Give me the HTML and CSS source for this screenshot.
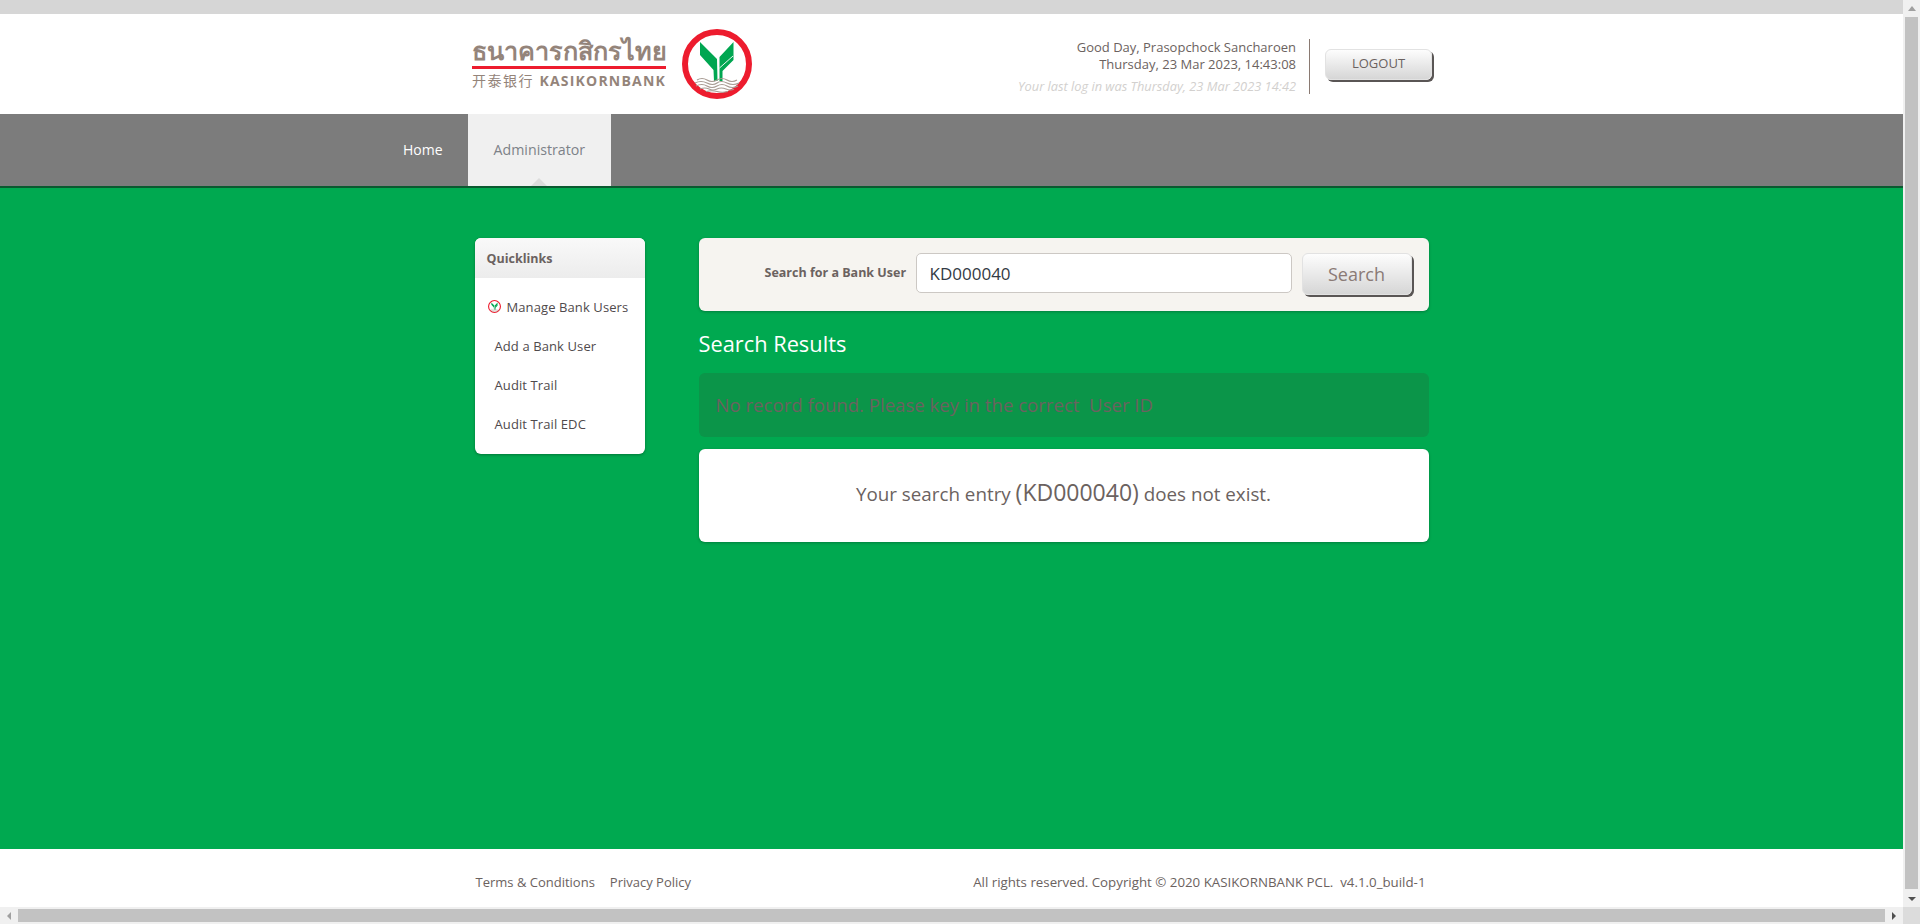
FILE: index.html
```html
<!DOCTYPE html>
<html lang="en">
<head>
    <meta charset="UTF-8">
    <title>KASIKORNBANK</title>
    <link rel="stylesheet" href="styles.css">
</head>
<body>
    <svg class="defs" width="0" height="0">
        <symbol id="emblem" viewBox="0 0 70 70">
            <circle cx="35" cy="35" r="32" fill="#fff" stroke="#ed1c2e" stroke-width="6"/>
            <path fill="#00a651" d="M18 13 L31.500 26.500 L35 30 L35.500 52 L32 52 L31.500 41 L18 26 Z"/>
            <path fill="#00a651" d="M51.500 13 L37.500 28 L37.500 52 L40.500 52 L40.500 42 L51.500 31 Z"/>
            <path fill="none" stroke="#fff" stroke-width="0.900" d="M37.500 39 L51 27"/>
            <g fill="none" stroke="#a89b93" stroke-width="1.200">
                <path d="M15 51 Q20 48 25 51 T35 51 T45 51 T55 51"/>
                <path d="M13 54 Q19 51 25 54 T35 54 T45 54 T57 54"/>
                <path d="M14 57 Q20 54 25 57 T35 57 T45 57 T56 57"/>
                <path d="M18 60 Q23 58 27 60 T35 60 T44 60 T52 60"/>
                <path d="M24 62.500 Q30 61 35 62.500 T46 62.500"/>
            </g>
        </symbol>
    </svg>

    <div class="window">
        <div class="page">
            <div class="top-strip"></div>
            <header class="site-header">
                <div class="header-inner">
                    <div class="logo">
                        <div class="logo-words">
                            <div class="logo-thai">ธนาคารกสิกรไทย</div>
                            <div class="logo-line"><span class="logo-cn">开泰银行</span> <span>KASIKORNBANK</span></div>
                        </div>
                        <svg class="logo-emblem"><use href="#emblem"/></svg>
                    </div>
                    <div class="user-info">
                        <div class="greeting">
                            <p>Good Day, Prasopchock Sancharoen</p>
                            <p>Thursday, 23 Mar 2023, 14:43:08</p>
                            <p class="last-login">Your last log in was Thursday, 23 Mar 2023 14:42</p>
                        </div>
                        <a class="btn btn-logout" href="#">LOGOUT</a>
                    </div>
                </div>
            </header>

            <nav class="main-nav">
                <a class="tab" href="#">Home</a>
                <a class="tab active" href="#">Administrator</a>
            </nav>

            <main class="content">
                <div class="container">
                    <aside class="quicklinks">
                        <h3>Quicklinks</h3>
                        <ul>
                            <li class="current"><svg class="mini-emblem"><use href="#emblem"/></svg>Manage Bank Users</li>
                            <li>Add a Bank User</li>
                            <li>Audit Trail</li>
                            <li>Audit Trail EDC</li>
                        </ul>
                    </aside>
                    <section class="results">
                        <form class="search-box">
                            <label for="user-id">Search for a Bank User</label>
                            <input type="text" id="user-id" value="KD000040">
                            <button class="btn btn-search" type="button">Search</button>
                        </form>
                        <h2>Search Results</h2>
                        <div class="alert">No record found. Please key in the correct&nbsp; User ID</div>
                        <div class="message">Your search entry <span class="entry">(KD000040)</span> does not exist.</div>
                    </section>
                </div>
            </main>

            <footer class="site-footer">
                <div class="footer-inner">
                    <div class="footer-links"><a href="#">Terms &amp; Conditions</a><a href="#">Privacy Policy</a></div>
                    <div class="copyright">All rights reserved. Copyright © 2020 KASIKORNBANK PCL.&nbsp; v4.1.0_build-1</div>
                </div>
            </footer>
        </div>

        <div class="scroll-v">
            <span class="arrow arrow-up"></span>
            <span class="thumb"></span>
            <span class="arrow arrow-down"></span>
        </div>
        <div class="scroll-h">
            <span class="arrow arrow-left"></span>
            <span class="thumb"></span>
            <span class="arrow arrow-right"></span>
        </div>
        <div class="scroll-corner"></div>
    </div>
</body>
</html>
```

FILE: styles.css
```css
html, body {
    margin: 0;
    padding: 0;
    height: 100%;
    overflow: hidden;
}
body {
    font-family: "Open Sans", "Noto Sans", sans-serif;
    color: #6b6260;
}
.defs {
    display: none;
}
.window {
    display: grid;
    grid-template-columns: 1fr 17px;
    grid-template-rows: 1fr 17px;
    height: 100%;
}
.page {
    display: flex;
    flex-direction: column;
    min-height: 0;
    background: #fff;
}
.top-strip {
    height: 14px;
    background: #d6d6d6;
}

/* header */
.site-header {
    height: 100px;
    background: #fff;
}
.header-inner {
    display: flex;
    justify-content: space-between;
    width: 960px;
    margin-left: 472px;
}
.logo {
    display: flex;
    align-items: center;
    gap: 16px;
    height: 100px;
}
.logo-words {
    width: 194px;
    margin-bottom: 10px;
    color: #94847a;
}
.logo-thai {
    height: 35px;
    border-bottom: 3px solid #ed1c2e;
    font-family: "Noto Sans", "DejaVu Sans", sans-serif;
    font-size: 25.2px;
    font-weight: 700;
    line-height: 39px;
    white-space: nowrap;
}
.logo-line {
    display: flex;
    justify-content: space-between;
    margin-top: 4px;
    font-size: 14px;
    font-weight: 700;
    line-height: 15px;
    letter-spacing: 1.2px;
}
.logo-cn {
    font-family: "Noto Sans CJK SC", sans-serif;
    font-weight: 400;
    letter-spacing: 1.5px;
}
.logo-emblem {
    width: 70px;
    height: 70px;
}
.user-info {
    display: flex;
    align-items: center;
    height: 100px;
}
.greeting {
    height: 55px;
    margin-top: 5px;
    padding-right: 13px;
    border-right: 1px solid #8a7a72;
    text-align: right;
    font-size: 13px;
    line-height: 17px;
}
.greeting p {
    margin: 0;
}
.greeting .last-login {
    margin-top: 5px;
    font-size: 12.8px;
    font-style: italic;
    color: #d2d0ce;
}
.btn {
    display: block;
    box-sizing: border-box;
    border: 1px solid #e2e2e2;
    border-radius: 6px;
    background: linear-gradient(#fdfdfd, #d6d6d6);
    box-shadow: 2px 2px 0 #5a5655;
    color: #6b6260;
    text-align: center;
    text-decoration: none;
    font-family: inherit;
}
.btn-logout {
    width: 107px;
    height: 31px;
    margin-left: 15px;
    font-size: 13px;
    line-height: 26px;
}

/* nav */
.main-nav {
    display: flex;
    height: 72px;
    padding-left: 378px;
    background: #7c7c7c;
}
.tab {
    position: relative;
    padding: 0 25px;
    color: #fff;
    font-size: 14px;
    line-height: 72px;
    text-decoration: none;
}
.tab.active {
    padding: 0 26px;
    background: #f0f0f0;
    color: #7d8288;
    font-size: 14.2px;
}
.tab.active::after {
    content: "";
    position: absolute;
    left: 50%;
    bottom: 0;
    margin-left: -8px;
    border: 8px solid transparent;
    border-top: 0;
    border-bottom-color: #dcdcdc;
}

/* main area */
.content {
    flex: 1;
    border-top: 2px solid #0a5a30;
    background: #00a950;
}
.container {
    display: flex;
    align-items: flex-start;
    width: 954px;
    margin: 0 auto;
    padding-top: 50px;
    gap: 54px;
}
.quicklinks {
    width: 170px;
    flex: none;
    padding-bottom: 11px;
    border-radius: 6px;
    background: #fff;
    box-shadow: 0 1px 3px rgba(0, 0, 0, 0.3);
}
.quicklinks h3 {
    margin: 0;
    height: 40px;
    padding-left: 12px;
    border-radius: 6px 6px 0 0;
    background: linear-gradient(#f9f9f9, #ececec);
    font-size: 12.5px;
    line-height: 42px;
}
.quicklinks ul {
    margin: 0;
    padding: 9px 0 0;
    list-style: none;
}
.quicklinks li {
    display: flex;
    align-items: center;
    height: 39px;
    padding-left: 20px;
    color: #4f4a4c;
    font-size: 13px;
    letter-spacing: 0.1px;
}
.quicklinks li.current {
    padding-left: 13px;
}
.mini-emblem {
    width: 13px;
    height: 13px;
    margin-right: 6px;
}
.results {
    flex: 1;
}
.search-box {
    display: flex;
    align-items: flex-start;
    box-sizing: border-box;
    height: 73px;
    padding: 15px 15px 0 66px;
    border-radius: 6px;
    background: #f6f4f0;
    box-shadow: 0 1px 3px rgba(0, 0, 0, 0.25);
}
.search-box label {
    width: 151px;
    font-size: 12.5px;
    font-weight: 700;
    line-height: 39px;
}
.search-box input {
    width: 376px;
    height: 40px;
    box-sizing: border-box;
    margin-right: 10px;
    padding: 0 13px;
    border: 1px solid #ccc8c4;
    border-radius: 5px;
    background: #fff;
    color: #333a44;
    font-family: inherit;
    font-size: 17px;
}
.btn-search {
    width: 110px;
    height: 42px;
    padding: 0;
    color: #8a7a76;
    font-size: 18px;
}
.results h2 {
    margin: 21px 0 17px;
    color: #fff;
    font-size: 21.8px;
    font-weight: 400;
    line-height: 24px;
}
.alert {
    height: 64px;
    padding-left: 17px;
    border-radius: 6px;
    background: #0b9549;
    font-size: 18.6px;
    line-height: 64px;
}
.message {
    height: 93px;
    margin-top: 12px;
    border-radius: 6px;
    background: #fff;
    box-shadow: 0 1px 3px rgba(0, 0, 0, 0.25);
    text-align: center;
    font-size: 18.8px;
    line-height: 86px;
}
.entry {
    font-size: 23px;
}

/* footer */
.site-footer {
    height: 58px;
    background: #fff;
}
.footer-inner {
    display: flex;
    justify-content: space-between;
    box-sizing: border-box;
    width: 954px;
    margin: 0 auto;
    padding: 0 3px 0 1px;
    font-size: 13px;
    line-height: 66px;
}
.copyright {
    font-size: 13.3px;
}
.footer-links a {
    margin-right: 15px;
    color: inherit;
    text-decoration: none;
}

/* scrollbars */
.scroll-v, .scroll-h {
    display: flex;
    align-items: center;
    justify-content: space-between;
    background: #f0f0f0;
}
.scroll-v {
    flex-direction: column;
}
.scroll-v .thumb {
    flex: 1;
    width: 13px;
    margin-bottom: 2px;
    background: #c2c2c2;
}
.scroll-h .thumb {
    flex: 1;
    height: 13px;
    background: #c2c2c2;
}
.arrow {
    flex: none;
    width: 0;
    height: 0;
    border: 4px solid transparent;
}
.arrow-up {
    border-top: 0;
    border-bottom: 5px solid #a0a0a0;
    margin: 6px 0;
}
.arrow-down {
    border-bottom: 0;
    border-top: 4px solid #505050;
    margin: 6px 0;
}
.arrow-left {
    border-left: 0;
    border-right: 4px solid #a0a0a0;
    margin: 0 7px;
}
.arrow-right {
    border-right: 0;
    border-left: 4px solid #505050;
    margin: 0 7px;
}
.scroll-corner {
    background: #dcdcdc;
}
```
